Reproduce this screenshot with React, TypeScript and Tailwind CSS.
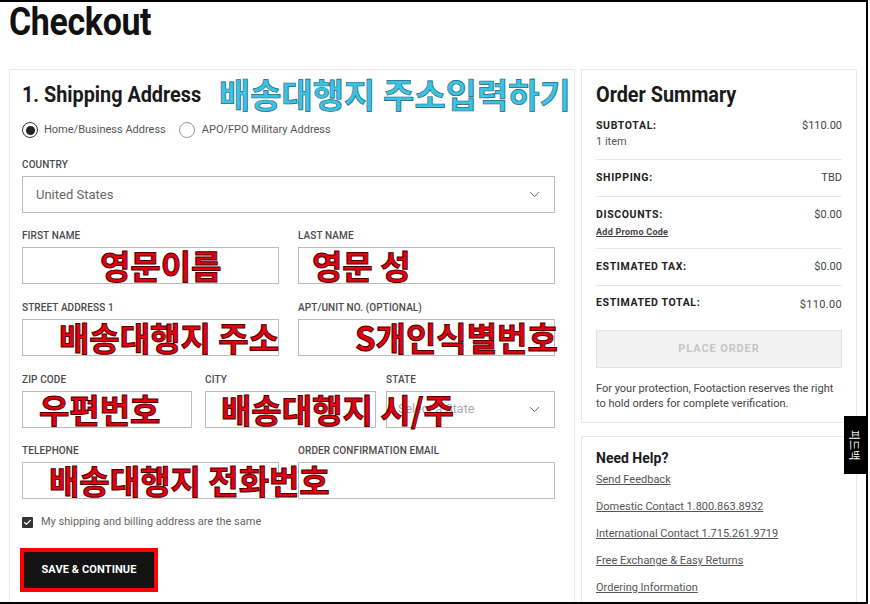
import { ChevronDown, Check } from "lucide-react";
import type { ReactNode } from "react";

const cyan =
  "font-['Noto_Sans_CJK_KR',sans-serif] font-bold text-[34px] leading-none text-[#3cc3e3] [-webkit-text-stroke:0.7px_#23657a] whitespace-nowrap";
const red =
  "font-['Noto_Sans_CJK_KR',sans-serif] font-bold text-[33px] leading-none text-[#e6000f] [-webkit-text-stroke:1px_#4a0000] whitespace-nowrap";

function Label({ children }: { children: ReactNode }) {
  return (
    <div className="h-[12px] text-[10px] leading-[12px] font-medium text-[#4a4a4a] tracking-[0.01em] mb-[5px]">
      {children}
    </div>
  );
}

function Box({
  note,
  noteLeft,
  children,
}: {
  note?: string;
  noteLeft?: string;
  children?: ReactNode;
}) {
  return (
    <div className="relative h-[37px] border border-[#bdbdbd] bg-white flex items-center">
      {children}
      {note && (
        <div className={`absolute top-0 h-full flex items-center z-10 ${noteLeft}`}>
          <span className={red}>{note}</span>
        </div>
      )}
    </div>
  );
}

function SummaryRow({
  label,
  value,
  sub,
  className,
}: {
  label: string;
  value: string;
  sub?: ReactNode;
  className?: string;
}) {
  return (
    <div className={`border-b border-[#e6e6e6] ${className}`}>
      <div className="flex justify-between items-start">
        <span className="text-[10.5px] leading-[12px] font-bold tracking-[0.06em] text-[#222]">
          {label}
        </span>
        <span className="text-[11px] leading-[12px] text-[#444]">{value}</span>
      </div>
      {sub}
    </div>
  );
}

export default function App() {
  return (
    <div className="w-[870px] h-[604px] bg-white overflow-hidden font-['Roboto',sans-serif]">
      <div className="relative w-[868px] h-[604px] border-t-2 border-r-2 border-b-2 border-black overflow-hidden pl-[9px]">
        {/* page title */}
        <div className="h-[40px] pt-[1px]">
          <span className="inline-block origin-left scale-x-[0.87] text-[39px] leading-[39px] font-bold text-[#111] tracking-[-0.01em]">
            Checkout
          </span>
        </div>

        <div className="flex mt-[27px] items-start">
          {/* shipping card */}
          <div className="w-[566px] h-[560px] flex-none border border-[#e8e8e8] pl-[12px] pr-[19px] pt-[7px]">
            <div className="flex items-center h-[36px]">
              <div className="w-[180px] flex-none whitespace-nowrap">
                <span className="inline-block origin-left scale-x-[0.9] text-[22px] leading-[26px] font-bold text-[#1a1a1a]">
                  1. Shipping Address
                </span>
              </div>
              <span className={`${cyan} ml-[17px] -mt-[3px]`}>배송대행지 주소입력하기</span>
            </div>

            <div className="flex items-center h-[16px] mt-[9px] text-[11px] text-[#555]">
              <span className="w-[16px] h-[16px] rounded-full border-[1.5px] border-[#333] flex items-center justify-center">
                <span className="w-[9px] h-[9px] rounded-full bg-[#222]" />
              </span>
              <span className="ml-[6px]">Home/Business Address</span>
              <span className="ml-[13px] w-[16px] h-[16px] rounded-full border border-[#999]" />
              <span className="ml-[7px]">APO/FPO Military Address</span>
            </div>

            <div className="mt-[21px]">
              <Label>COUNTRY</Label>
              <div className="h-[37px] border border-[#bdbdbd] flex items-center justify-between pl-[13px] pr-[11px]">
                <span className="text-[13px] text-[#666]">United States</span>
                <ChevronDown size={17} strokeWidth={1.4} className="text-[#666]" />
              </div>
            </div>

            <div className="grid grid-cols-2 gap-x-[19px] mt-[17px]">
              <div>
                <Label>FIRST NAME</Label>
                <Box note="영문이름" noteLeft="left-[77px]" />
              </div>
              <div>
                <Label>LAST NAME</Label>
                <Box note="영문 성" noteLeft="left-[13px]" />
              </div>
            </div>

            <div className="grid grid-cols-2 gap-x-[19px] mt-[18px]">
              <div>
                <Label>STREET ADDRESS 1</Label>
                <Box note="배송대행지 주소" noteLeft="left-[36px]" />
              </div>
              <div>
                <Label>APT/UNIT NO. (OPTIONAL)</Label>
                <Box note="S개인식별번호" noteLeft="left-[56px]" />
              </div>
            </div>

            <div className="flex mt-[18px]">
              <div className="w-[170px]">
                <Label>ZIP CODE</Label>
                <Box note="우편번호" noteLeft="left-[16px]" />
              </div>
              <div className="w-[171px] ml-[13px] relative z-10">
                <Label>CITY</Label>
                <Box note="배송대행지 시/주" noteLeft="left-[15px]" />
              </div>
              <div className="w-[169px] ml-[10px]">
                <Label>STATE</Label>
                <Box>
                  <div className="flex-1 flex items-center justify-between pl-[11px] pr-[11px]">
                    <span className="text-[12.5px] text-[#aaa]">Select a State</span>
                    <ChevronDown size={17} strokeWidth={1.4} className="text-[#666]" />
                  </div>
                </Box>
              </div>
            </div>

            <div className="grid grid-cols-2 gap-x-[19px] mt-[17px]">
              <div>
                <Label>TELEPHONE</Label>
                <Box note="배송대행지 전화번호" noteLeft="left-[26px]" />
              </div>
              <div>
                <Label>ORDER CONFIRMATION EMAIL</Label>
                <Box />
              </div>
            </div>

            <div className="flex items-center mt-[18px] h-[11px]">
              <span className="w-[11px] h-[11px] bg-[#333] flex items-center justify-center rounded-[1px]">
                <Check size={9} strokeWidth={3} className="text-white" />
              </span>
              <span className="ml-[8px] text-[11px] text-[#666]">
                My shipping and billing address are the same
              </span>
            </div>

            <div className="mt-[20px] -ml-[2px] w-[138px] h-[44px] border-[4px] border-[#f00] bg-[#141414] flex items-center justify-center">
              <span className="text-[11px] font-bold text-white tracking-[0.01em]">
                SAVE &amp; CONTINUE
              </span>
            </div>
          </div>

          {/* right column */}
          <div className="w-[276px] flex-none ml-[6px]">
            <div className="h-[354px] border border-[#e8e8e8] px-[14px] pt-[12px]">
              <div className="h-[26px] whitespace-nowrap">
                <span className="inline-block origin-left scale-x-[0.9] text-[22px] leading-[26px] font-bold text-[#1a1a1a]">
                  Order Summary
                </span>
              </div>
              <SummaryRow
                className="mt-[12px] pb-[11px]"
                label="SUBTOTAL:"
                value="$110.00"
                sub={<div className="mt-[4px] text-[11px] leading-[12px] text-[#555]">1 item</div>}
              />
              <SummaryRow className="pt-[12px] pb-[12px]" label="SHIPPING:" value="TBD" />
              <SummaryRow
                className="pt-[12px] pb-[11px]"
                label="DISCOUNTS:"
                value="$0.00"
                sub={
                  <div className="mt-[6px] text-[9px] leading-[10px] font-bold text-[#444] underline tracking-[0.03em]">
                    Add Promo Code
                  </div>
                }
              />
              <SummaryRow className="pt-[12px] pb-[12px]" label="ESTIMATED TAX:" value="$0.00" />
              <div className="pt-[11px] flex justify-between items-start">
                <span className="text-[10.5px] leading-[12px] font-bold tracking-[0.06em] text-[#222]">
                  ESTIMATED TOTAL:
                </span>
                <span className="mt-[2px] text-[11px] leading-[12px] text-[#444] tracking-[0.03em]">
                  $110.00
                </span>
              </div>
              <div className="mt-[19px] h-[38px] bg-[#f2f2f2] border border-[#e2e2e2] flex items-center justify-center">
                <span className="text-[11px] font-bold tracking-[0.08em] text-[#c6c6c6]">
                  PLACE ORDER
                </span>
              </div>
              <p className="mt-[13px] text-[11px] leading-[15px] text-[#444]">
                For your protection, Footaction reserves the right to hold orders for complete
                verification.
              </p>
            </div>

            <div className="mt-[13px] h-[200px] border border-[#e8e8e8] px-[14px] pt-[12px]">
              <div className="text-[14px] leading-[18px] font-bold text-[#1a1a1a]">Need Help?</div>
              <div className="mt-[6px] flex flex-col gap-y-[13px] text-[11px] leading-[14px] text-[#555] underline">
                <span>Send Feedback</span>
                <span>Domestic Contact 1.800.863.8932</span>
                <span>International Contact 1.715.261.9719</span>
                <span>Free Exchange &amp; Easy Returns</span>
                <span>Ordering Information</span>
              </div>
            </div>
          </div>
        </div>

        {/* feedback tab */}
        <div className="absolute right-0 top-[414px] w-[22px] h-[58px] bg-black flex items-center justify-center">
          <span className="[writing-mode:vertical-rl] [text-orientation:sideways] text-[11px] text-white font-['Noto_Sans_CJK_KR',sans-serif]">
            피드백
          </span>
        </div>
      </div>
    </div>
  );
}
